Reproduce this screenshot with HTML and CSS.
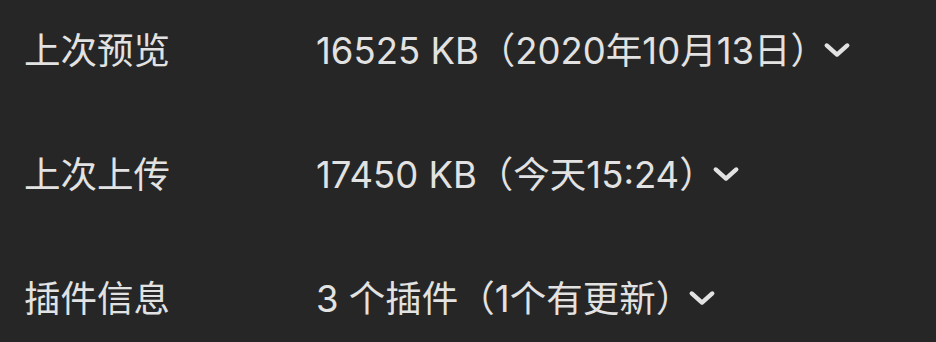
FILE: index.html
```html
<!DOCTYPE html>
<html lang="zh-CN">
<head>
    <meta charset="UTF-8">
    <title>项目信息</title>
    <link rel="stylesheet" href="styles.css">
</head>
<body>
    <main class="info-list">
        <div class="info-row">
            <span class="info-label">上次预览</span>
            <span class="info-value">16525 KB（2020年10月13日）<svg class="chevron" viewBox="0 0 24 14"><path d="M3 3 L12 11 L21 3"/></svg></span>
        </div>
        <div class="info-row">
            <span class="info-label">上次上传</span>
            <span class="info-value">17450 KB（今天15:24）<svg class="chevron" viewBox="0 0 24 14"><path d="M3 3 L12 11 L21 3"/></svg></span>
        </div>
        <div class="info-row">
            <span class="info-label">插件信息</span>
            <span class="info-value">3 个插件（1个有更新）<svg class="chevron" viewBox="0 0 24 14"><path d="M3 3 L12 11 L21 3"/></svg></span>
        </div>
    </main>
</body>
</html>
```

FILE: styles.css
```css
:root {
    --bg-color: #262626;
    --text-color: #e2e2e2;
}
html, body {
    margin: 0;
    padding: 0;
    background-color: var(--bg-color);
    height: 100%;
}
body {
    font-family: Inter, "Noto Sans CJK SC", sans-serif;
    color: var(--text-color);
    font-size: 36.5px;
}
.info-list {
    display: flex;
    flex-direction: column;
    gap: 76px;
    padding: 24px 0 0 24px;
}
.info-row {
    display: flex;
    align-items: center;
    height: 48px;
}
.info-label {
    width: 292px;
    flex-shrink: 0;
}
.info-value {
    display: flex;
    align-items: center;
    white-space: nowrap;
}
.chevron {
    width: 28px;
    height: 16px;
    margin-left: -4px;
    margin-top: 4px;
    fill: none;
    stroke: var(--text-color);
    stroke-width: 3.8;
    stroke-linecap: round;
    stroke-linejoin: round;
}
```
